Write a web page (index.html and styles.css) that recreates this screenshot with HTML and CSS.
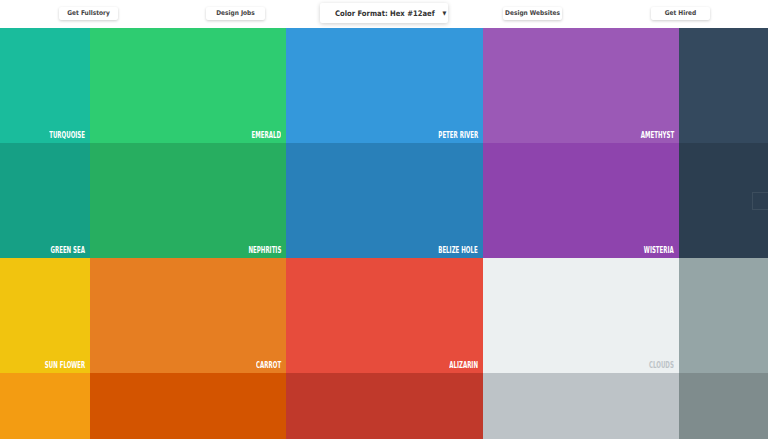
FILE: index.html
```html
<!DOCTYPE html>
<html lang="en">

<head>
  <meta charset="UTF-8" />
  <meta name="viewport" content="width=device-width, initial-scale=1.0" />
  <title>Flat UI Colors</title>
  <link rel="stylesheet" href="styles.css">
</head>

<body>
  <div class="topbar">
    <a class="btn fullstory" href="#">Get Fullstory</a>
    <a class="btn jobs" href="#">Design Jobs</a>
    <div class="format">Color Format: Hex #12aef <span class="caret">▼</span></div>
    <a class="btn websites" href="#">Design Websites</a>
    <a class="btn hired" href="#">Get Hired</a>
  </div>

  <div class="grid">
    <div class="color" style="background:#1abc9c"><span>Turquoise</span></div>
    <div class="color" style="background:#2ecc71"><span>Emerald</span></div>
    <div class="color" style="background:#3498db"><span>Peter River</span></div>
    <div class="color" style="background:#9b59b6"><span>Amethyst</span></div>
    <div class="color" style="background:#34495e"></div>

    <div class="color" style="background:#16a085"><span>Green Sea</span></div>
    <div class="color" style="background:#27ae60"><span>Nephritis</span></div>
    <div class="color" style="background:#2980b9"><span>Belize Hole</span></div>
    <div class="color" style="background:#8e44ad"><span>Wisteria</span></div>
    <div class="color" style="background:#2c3e50"></div>

    <div class="color" style="background:#f1c40f"><span>Sun Flower</span></div>
    <div class="color" style="background:#e67e22"><span>Carrot</span></div>
    <div class="color" style="background:#e74c3c"><span>Alizarin</span></div>
    <div class="color light" style="background:#ecf0f1"><span>Clouds</span></div>
    <div class="color" style="background:#95a5a6"></div>

    <div class="color" style="background:#f39c12"></div>
    <div class="color" style="background:#d35400"></div>
    <div class="color" style="background:#c0392b"></div>
    <div class="color" style="background:#bdc3c7"></div>
    <div class="color" style="background:#7f8c8d"></div>
  </div>

  <div class="side-tab"></div>
</body>

</html>
```

FILE: styles.css
```css
body {
  margin: 0;
  width: 768px;
  height: 439px;
  overflow: hidden;
  font-family: 'DejaVu Sans Condensed', 'DejaVu Sans', sans-serif;
  background: white;
}

.topbar {
  height: 28px;
  display: flex;
  align-items: center;
  background: white;
}

.btn {
  width: 59px;
  height: 13px;
  line-height: 13px;
  margin-top: -2px;
  text-align: center;
  font-size: 6.5px;
  font-weight: bold;
  color: #444;
  text-decoration: none;
  white-space: nowrap;
  background: white;
  border-radius: 2px;
  box-shadow: 0 1px 3px rgba(0, 0, 0, 0.2);
}

.fullstory { margin-left: 59px; }
.jobs { margin-left: 88px; }
.format { margin-left: 55px; }
.websites { margin-left: 55px; }
.hired { margin-left: 89px; }

.format {
  width: 128px;
  height: 20px;
  margin-top: -2px;
  box-sizing: border-box;
  padding-left: 15px;
  display: flex;
  align-items: center;
  white-space: nowrap;
  font-size: 7.6px;
  font-weight: bold;
  color: #333;
  background: white;
  border-radius: 2px;
  box-shadow: 0 1px 4px rgba(0, 0, 0, 0.2);
}

.caret {
  margin-left: 8px;
  font-size: 5.5px;
}

.grid {
  display: grid;
  grid-template-columns: 90px 196px 197px 196px 89px;
  grid-template-rows: 115px 115px 115px 66px;
}

.color {
  display: flex;
  align-items: flex-end;
  justify-content: flex-end;
  padding: 0 5px 4px 0;
  color: white;
  font-size: 9.5px;
  font-weight: bold;
  text-transform: uppercase;
  line-height: 1;
}

.color span {
  white-space: nowrap;
  transform: scaleX(0.64);
  transform-origin: right bottom;
}

.color.light {
  color: #bdc3c7;
}

.side-tab {
  position: absolute;
  left: 752px;
  top: 192px;
  width: 16px;
  height: 18px;
  box-sizing: border-box;
  border: 1px solid rgba(255, 255, 255, 0.08);
  border-right: none;
}
```
